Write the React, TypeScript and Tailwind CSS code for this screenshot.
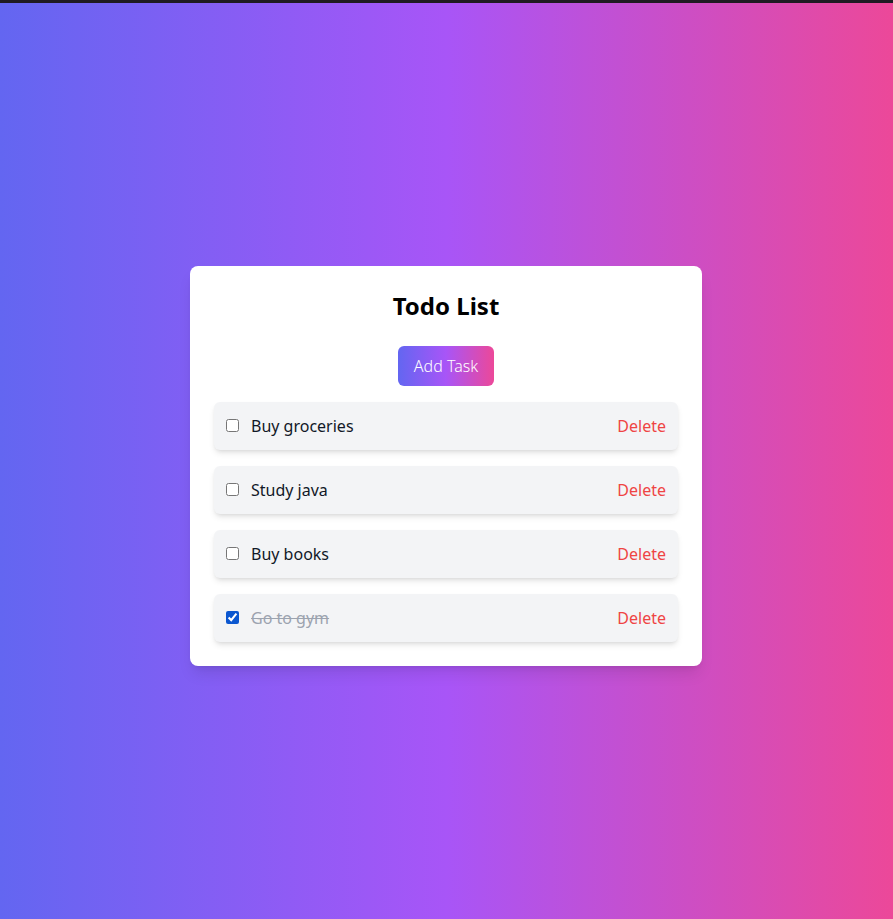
import { useState } from "react";

type Task = {
    id: number;
    text: string;
    done: boolean;
};

const initialTasks: Task[] = [
    {id: 1, text: "Buy groceries", done: false},
    {id: 2, text: "Study java", done: false},
    {id: 3, text: "Buy books", done: false},
    {id: 4, text: "Go to gym", done: true}
];

export default function App() {
    const [tasks, setTasks] = useState<Task[]>(initialTasks);

    const toggle = (id: number) =>
        setTasks(tasks.map(t => t.id === id ? {...t, done: !t.done} : t));

    const remove = (id: number) => setTasks(tasks.filter(t => t.id !== id));

    return (
        <div className="min-h-screen flex flex-col font-['Noto_Sans',sans-serif]">
            <div className="h-[3px] bg-[#1f1b22]"/>
            <div className="flex-1 flex items-center justify-center pt-[9px] pr-px bg-linear-to-r/srgb from-[#6366f1] via-[#a855f7] to-[#ec4899]">
                <div className="w-[512px] bg-white rounded-lg shadow-lg p-6">
                    <h1 className="text-2xl font-bold text-center text-black">Todo List</h1>
                    <div className="flex justify-center mt-6">
                        <button
                            className="px-4 h-10 rounded-md text-white font-light bg-linear-to-r/srgb from-[#6366f1] via-[#a855f7] to-[#ec4899]">
                            Add Task
                        </button>
                    </div>
                    <ul className="flex flex-col gap-4 mt-4">
                        {tasks.map(task =>
                            <li key={task.id}
                                className="flex items-center justify-between bg-[#f3f4f6] rounded-md shadow-md p-3">
                                <div className="flex items-center">
                                    <input
                                        type="checkbox"
                                        checked={task.done}
                                        onChange={() => toggle(task.id)}
                                        className="w-[13px] h-[13px] mr-3 accent-[#0b57d0]"
                                    />
                                    <span className={task.done ? "line-through text-[#9ca3af]" : "text-[#111827]"}>
                                        {task.text}
                                    </span>
                                </div>
                                <button className="text-[#ef4444]" onClick={() => remove(task.id)}>Delete</button>
                            </li>)}
                    </ul>
                </div>
            </div>
        </div>
    );
}
